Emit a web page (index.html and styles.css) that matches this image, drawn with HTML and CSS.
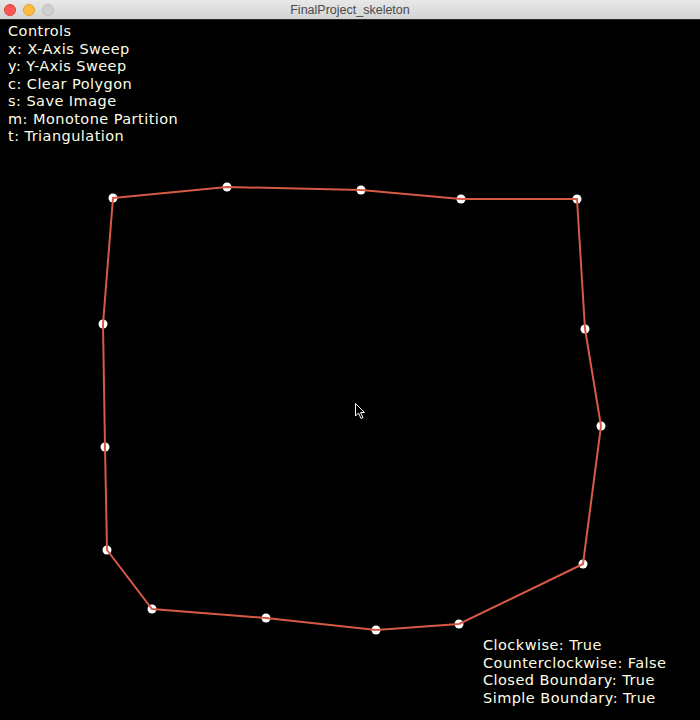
FILE: index.html
```html
<!DOCTYPE html>
<html>
<head>
<meta charset="utf-8">
<link rel="stylesheet" href="styles.css">
</head>
<body>
<div class="window">
  <div class="titlebar">
    <div class="lights">
      <span class="light red"></span>
      <span class="light yellow"></span>
      <span class="light gray"></span>
    </div>
    <div class="title">FinalProject_skeleton</div>
  </div>
  <div class="stage">
    <svg class="canvas" width="700" height="700" viewBox="0 20 700 700">
      <g fill="#ffffff">
        <circle cx="113" cy="198" r="4.5"/>
        <circle cx="227" cy="187" r="4.5"/>
        <circle cx="361" cy="190" r="4.5"/>
        <circle cx="461" cy="199" r="4.5"/>
        <circle cx="577" cy="199" r="4.5"/>
        <circle cx="585" cy="329" r="4.5"/>
        <circle cx="601" cy="426" r="4.5"/>
        <circle cx="583" cy="564" r="4.5"/>
        <circle cx="459" cy="624" r="4.5"/>
        <circle cx="376" cy="630" r="4.5"/>
        <circle cx="266" cy="618" r="4.5"/>
        <circle cx="152" cy="609" r="4.5"/>
        <circle cx="107" cy="550" r="4.5"/>
        <circle cx="105" cy="447" r="4.5"/>
        <circle cx="103" cy="324" r="4.5"/>
      </g>
      <polygon points="113,198 227,187 361,190 461,199 577,199 585,329 601,426 583,564 459,624 376,630 266,618 152,609 107,550 105,447 103,324" fill="none" stroke="#d65a45" stroke-width="2"/>
      <path d="M355.5 403.5 L355.5 416 L358.5 413 L361 418.5 L363 417.5 L360.5 412.5 L364.5 412.5 Z" fill="#000" stroke="#fff" stroke-width="1" stroke-linejoin="round"/>
    </svg>
    <div class="controls">
      <div>Controls</div>
      <div>x: X-Axis Sweep</div>
      <div>y: Y-Axis Sweep</div>
      <div>c: Clear Polygon</div>
      <div>s: Save Image</div>
      <div>m: Monotone Partition</div>
      <div>t: Triangulation</div>
    </div>
    <div class="status">
      <div>Clockwise: True</div>
      <div>Counterclockwise: False</div>
      <div>Closed Boundary: True</div>
      <div>Simple Boundary: True</div>
    </div>
  </div>
</div>
</body>
</html>
```
FILE: styles.css
```css
html, body {
  margin: 0;
  padding: 0;
  background: #000;
}
.window {
  width: 700px;
  height: 720px;
  display: flex;
  flex-direction: column;
  overflow: hidden;
}
.titlebar {
  height: 19px;
  flex: 0 0 19px;
  background: linear-gradient(#e8e8e8, #d3d3d3);
  border-bottom: 1px solid #2a2a2a;
  display: grid;
  grid-template-columns: 1fr;
  align-items: center;
}
.lights {
  grid-area: 1 / 1;
  display: flex;
  gap: 7px;
  padding-left: 4px;
}
.light {
  width: 12px;
  height: 12px;
  border-radius: 50%;
  display: block;
  box-sizing: border-box;
}
.red { background: #fc5753; border: 0.5px solid #df3d37; }
.yellow { background: #fdbc40; border: 0.5px solid #de9f34; }
.gray { background: #cfcfcf; border: 0.5px solid #bdbdbd; }
.title {
  grid-area: 1 / 1;
  text-align: center;
  font-family: "Liberation Sans", Arial, sans-serif;
  font-size: 12.5px;
  color: #4a4a4a;
}
.stage {
  flex: 1;
  display: grid;
  grid-template-columns: 700px;
  grid-template-rows: 700px;
  font-family: "DejaVu Sans", Verdana, sans-serif;
  font-size: 14.5px;
  letter-spacing: 0.45px;
  line-height: 17.5px;
  color: #fffde6;
}
.canvas {
  grid-area: 1 / 1;
  display: block;
}
.controls {
  grid-area: 1 / 1;
  align-self: start;
  justify-self: start;
  padding: 3px 0 0 8px;
}
.status {
  grid-area: 1 / 1;
  align-self: end;
  justify-self: start;
  margin-left: 483px;
  padding-bottom: 13px;
}
```
